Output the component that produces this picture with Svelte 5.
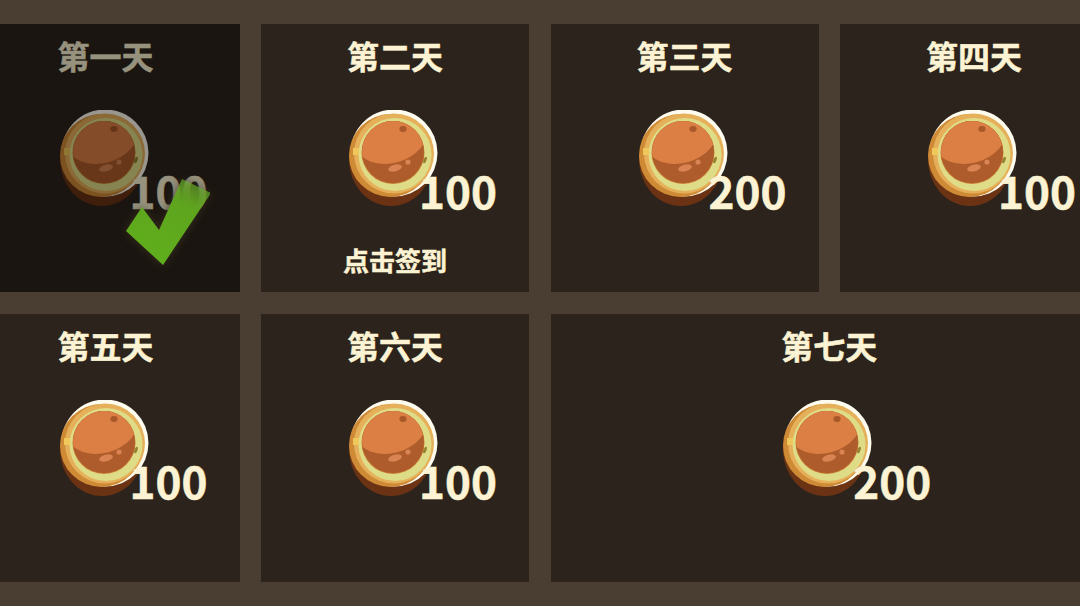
<script>
	const days = [
		{ name: '第一天', amount: 100, done: true },
		{ name: '第二天', amount: 100, today: true },
		{ name: '第三天', amount: 200 },
		{ name: '第四天', amount: 100 },
		{ name: '第五天', amount: 100 },
		{ name: '第六天', amount: 100 },
		{ name: '第七天', amount: 200, wide: true }
	];
</script>

{#snippet coin(id)}
	<svg class="coin" viewBox="0 0 90 96" width="90" height="96">
		<defs>
			<clipPath id="ball-{id}"><circle cx="44" cy="42" r="31" /></clipPath>
		</defs>
		<ellipse cx="42" cy="50" rx="42" ry="46" fill="#6b3314" />
		<circle cx="45" cy="43" r="43.5" fill="#fdfbee" />
		<circle cx="41.5" cy="45.5" r="41.5" fill="#cf8a36" />
		<circle cx="45" cy="43.5" r="40" fill="#e6b05a" />
		<circle cx="46" cy="44.5" r="36.5" fill="#dfdc88" />
		<circle cx="44" cy="42.5" r="31.5" fill="#c97b35" />
		<circle cx="44" cy="42" r="31" fill="#ae5c2b" />
		<g clip-path="url(#ball-{id})">
			<ellipse cx="42" cy="28" rx="36" ry="25" transform="rotate(-15 42 28)" fill="#dc7f45" />
		</g>
		<ellipse cx="54" cy="19" rx="3.6" ry="3" fill="#a9582a" />
		<ellipse cx="46" cy="58" rx="7" ry="3.4" transform="rotate(-15 46 58)" fill="#d98452" />
		<circle cx="59" cy="52" r="2.6" fill="#d98452" />
		<rect x="4" y="38" width="6" height="7" fill="#efc75a" />
		<ellipse cx="76" cy="50" rx="1.5" ry="3.5" transform="rotate(20 76 50)" fill="#94802f" />
	</svg>
{/snippet}

<main class="grid">
	{#each days as day, i}
		<section class="card" class:wide={day.wide} class:done={day.done}>
			<h2>{day.name}</h2>
			<div class="reward">
				{@render coin(i)}
				<span class="amount">{day.amount}</span>
			</div>
			{#if day.today}
				<p class="action">点击签到</p>
			{/if}
			{#if day.done}
				<svg class="check" viewBox="0 0 100 100" width="100" height="100">
					<defs>
						<linearGradient id="check-fill" x1="0.8" y1="0" x2="0.4" y2="1">
							<stop offset="0" stop-color="#6cb52c" stop-opacity="0.55" />
							<stop offset="0.3" stop-color="#5ea51e" />
							<stop offset="1" stop-color="#5fae1c" />
						</linearGradient>
					</defs>
					<polygon points="16,61 32,37 49,60 72,9 101,23 53,95" fill="url(#check-fill)" />
				</svg>
			{/if}
		</section>
	{/each}
</main>

<style>
	:global(body) {
		margin: 0;
		background: #4a3d31;
		overflow: hidden;
	}

	.grid {
		display: grid;
		grid-template-columns: repeat(4, 268px);
		grid-auto-rows: 268px;
		gap: 22px 21.5px;
		padding-top: 24px;
		margin-left: -28.5px;
		width: 1137px;
		height: 582px;
		font-family: 'Noto Sans CJK SC', 'Noto Sans', sans-serif;
	}

	.card {
		position: relative;
		display: flex;
		flex-direction: column;
		align-items: center;
		background: #2c231c;
		color: #fbf3d3;
	}

	.card.wide {
		grid-column: span 2;
	}

	.card.done::after {
		content: '';
		position: absolute;
		inset: 0;
		background: rgba(0, 0, 0, 0.4);
	}

	h2 {
		margin: 9px 0 0;
		font-size: 32px;
		line-height: 44px;
		font-weight: 700;
		-webkit-text-stroke: 0.5px currentColor;
	}

	.reward {
		position: relative;
		width: 90px;
		height: 96px;
		margin-top: 33px;
		transform: translateX(-1px);
	}

	.coin {
		display: block;
	}

	.amount {
		position: absolute;
		left: 70px;
		top: 50px;
		font-size: 44px;
		line-height: 60px;
		font-weight: 700;
		-webkit-text-stroke: 0.5px currentColor;
	}

	.action {
		margin: 35px 0 0;
		font-size: 26px;
		line-height: 38px;
		font-weight: 700;
		-webkit-text-stroke: 0.5px currentColor;
	}

	.check {
		position: absolute;
		left: 138.5px;
		top: 146px;
		z-index: 1;
		filter: drop-shadow(0 0 5px rgba(60, 50, 30, 0.9));
	}
</style>
